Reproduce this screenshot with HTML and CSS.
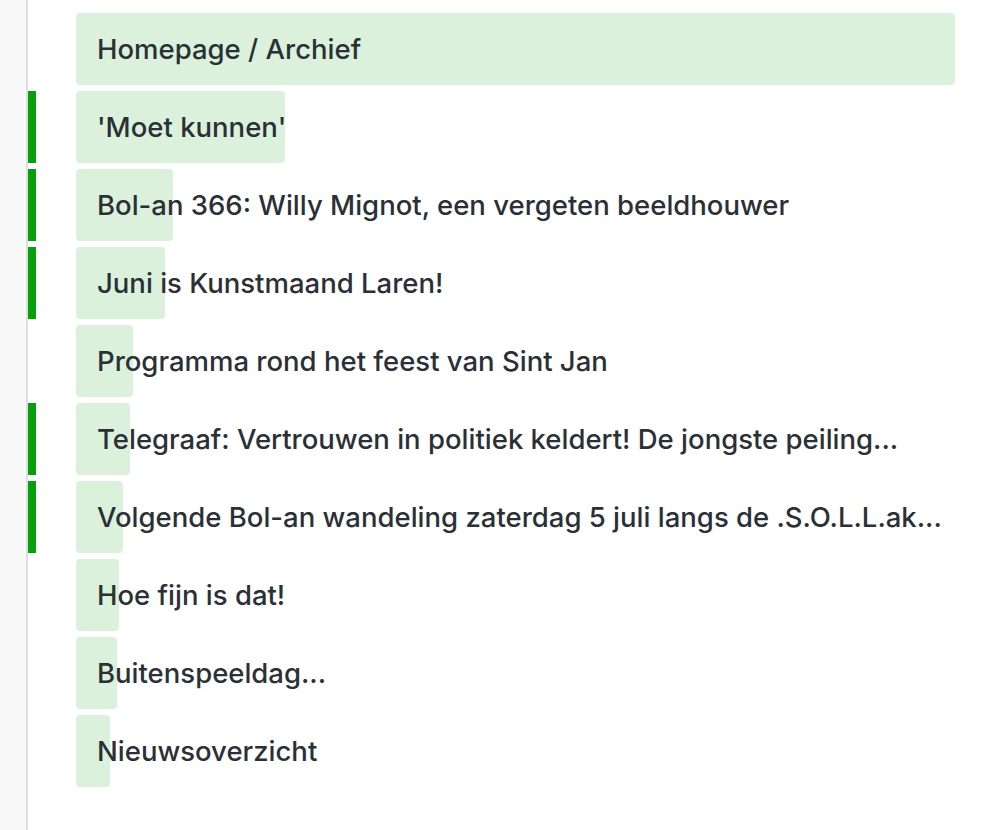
FILE: index.html
```html
<!DOCTYPE html>
<html lang="nl">
<head>
    <meta charset="UTF-8">
    <meta name="viewport" content="width=device-width, initial-scale=1.0">
    <title>Populaire pagina's</title>
    <link rel="stylesheet" href="styles.css">
</head>
<body>
    <div class="page">
        <div class="gutter"></div>
        <ul class="hits">
            <li class="hit">
                <span class="bar" style="width: 879px"></span>
                <span class="title">Homepage / Archief</span>
            </li>
            <li class="hit is-new">
                <span class="bar" style="width: 209px"></span>
                <span class="title">'Moet kunnen'</span>
            </li>
            <li class="hit is-new">
                <span class="bar" style="width: 97px"></span>
                <span class="title">Bol-an 366: Willy Mignot, een vergeten beeldhouwer</span>
            </li>
            <li class="hit is-new">
                <span class="bar" style="width: 89px"></span>
                <span class="title">Juni is Kunstmaand Laren!</span>
            </li>
            <li class="hit">
                <span class="bar" style="width: 57px"></span>
                <span class="title">Programma rond het feest van Sint Jan</span>
            </li>
            <li class="hit is-new">
                <span class="bar" style="width: 54px"></span>
                <span class="title">Telegraaf: Vertrouwen in politiek keldert! De jongste peiling...</span>
            </li>
            <li class="hit is-new">
                <span class="bar" style="width: 47px"></span>
                <span class="title">Volgende Bol-an wandeling zaterdag 5 juli langs de .S.O.L.L.ak...</span>
            </li>
            <li class="hit">
                <span class="bar" style="width: 43px"></span>
                <span class="title">Hoe fijn is dat!</span>
            </li>
            <li class="hit">
                <span class="bar" style="width: 41px"></span>
                <span class="title">Buitenspeeldag...</span>
            </li>
            <li class="hit">
                <span class="bar" style="width: 34px"></span>
                <span class="title">Nieuwsoverzicht</span>
            </li>
        </ul>
    </div>
</body>
</html>
```

FILE: styles.css
```css
html, body {
    height: 100%;
}
body {
    font-family: Inter, 'Liberation Sans', sans-serif;
    margin: 0;
    padding: 0;
    background-color: #ffffff;
    color: #2a3036;
}
.page {
    display: flex;
    min-height: 100%;
}
.gutter {
    width: 26px;
    flex-shrink: 0;
    background-color: #f9f9f9;
    border-right: 2px solid #dedede;
}
.hits {
    list-style: none;
    margin: 0;
    padding: 13px 0 0 0;
    display: flex;
    flex-direction: column;
    gap: 6px;
}
.hit {
    position: relative;
    height: 72px;
    display: flex;
    align-items: center;
    padding-left: 40px;
    border-left: 8px solid transparent;
}
.hit.is-new {
    border-left-color: #06a00a;
}
.bar {
    position: absolute;
    top: 0;
    left: 40px;
    height: 100%;
    background-color: #dbf1db;
    border-radius: 4px;
}
.title {
    position: relative;
    padding-left: 21px;
    font-size: 27.5px;
    font-weight: 500;
    white-space: nowrap;
}
```
